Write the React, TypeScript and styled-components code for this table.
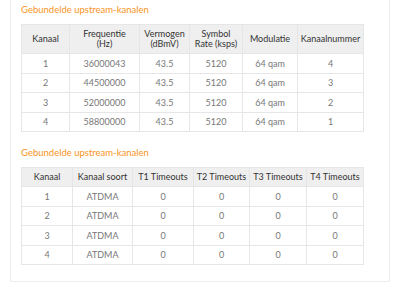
import { createGlobalStyle, styled } from "styled-components";

const GlobalStyle = createGlobalStyle`
  body {
    margin: 0;
    background: #ffffff;
    font-family: Lato, "Open Sans", sans-serif;
  }
`;

const Page = styled.div`
  padding: 0 10px;
`;

const Panel = styled.div`
  border: 1px solid #eeeeee;
  border-top: none;
  padding: 4px 10px 16px;
  background: #fff;
`;

const Title = styled.h3`
  margin: 0 0 8px;
  font-size: 9.5px;
  font-weight: 400;
  line-height: 12px;
  color: #f7941d;
`;

const Table = styled.table<{ $gap?: number }>`
  border-collapse: collapse;
  table-layout: fixed;
  width: 342px;
  margin-bottom: ${(p) => p.$gap ?? 0}px;
  font-size: 9px;
`;

const Head = styled.th<{ $h: number }>`
  background: #efefef;
  border: 1px solid #e6e6e6;
  color: #333;
  font-weight: 400;
  height: ${(p) => p.$h}px;
  padding: 0;
  line-height: 10.5px;
  text-align: center;
  white-space: nowrap;
`;

const Cell = styled.td`
  border: 1px solid #e6e6e6;
  color: #777;
  height: 18.5px;
  padding: 0;
  text-align: center;
`;

const upstream = [
  ["1", "36000043", "43.5", "5120", "64 qam", "4"],
  ["2", "44500000", "43.5", "5120", "64 qam", "3"],
  ["3", "52000000", "43.5", "5120", "64 qam", "2"],
  ["4", "58800000", "43.5", "5120", "64 qam", "1"],
];

const timeouts = [
  ["1", "ATDMA", "0", "0", "0", "0"],
  ["2", "ATDMA", "0", "0", "0", "0"],
  ["3", "ATDMA", "0", "0", "0", "0"],
  ["4", "ATDMA", "0", "0", "0", "0"],
];

const cols1 = [48, 70, 50, 53, 55, 66];
const heads1 = ["Kanaal", "Frequentie\n(Hz)", "Vermogen\n(dBmV)", "Symbol\nRate (ksps)", "Modulatie", "Kanaalnummer"];
const cols2 = [51, 60, 61, 56, 57, 57];
const heads2 = ["Kanaal", "Kanaal soort", "T1 Timeouts", "T2 Timeouts", "T3 Timeouts", "T4 Timeouts"];

function DataTable({ cols, heads, rows, headH, gap }: { cols: number[]; heads: string[]; rows: string[][]; headH: number; gap?: number }) {
  return (
    <Table $gap={gap}>
      <colgroup>
        {cols.map((w, i) => (
          <col key={i} style={{ width: w }} />
        ))}
      </colgroup>
      <thead>
        <tr>
          {heads.map((h) => (
            <Head key={h} $h={headH}>
              {h.split("\n").map((part, i) => (
                <span key={i}>
                  {i > 0 && <br />}
                  {part}
                </span>
              ))}
            </Head>
          ))}
        </tr>
      </thead>
      <tbody>
        {rows.map((r, i) => (
          <tr key={i}>
            {r.map((c, j) => (
              <Cell key={j}>{c}</Cell>
            ))}
          </tr>
        ))}
      </tbody>
    </Table>
  );
}

export default function App() {
  return (
    <>
      <GlobalStyle />
      <Page>
        <Panel>
          <Title>Gebundelde upstream-kanalen</Title>
          <DataTable cols={cols1} heads={heads1} rows={upstream} headH={28} gap={15} />
          <Title>Gebundelde upstream-kanalen</Title>
          <DataTable cols={cols2} heads={heads2} rows={timeouts} headH={18} />
        </Panel>
      </Page>
    </>
  );
}
